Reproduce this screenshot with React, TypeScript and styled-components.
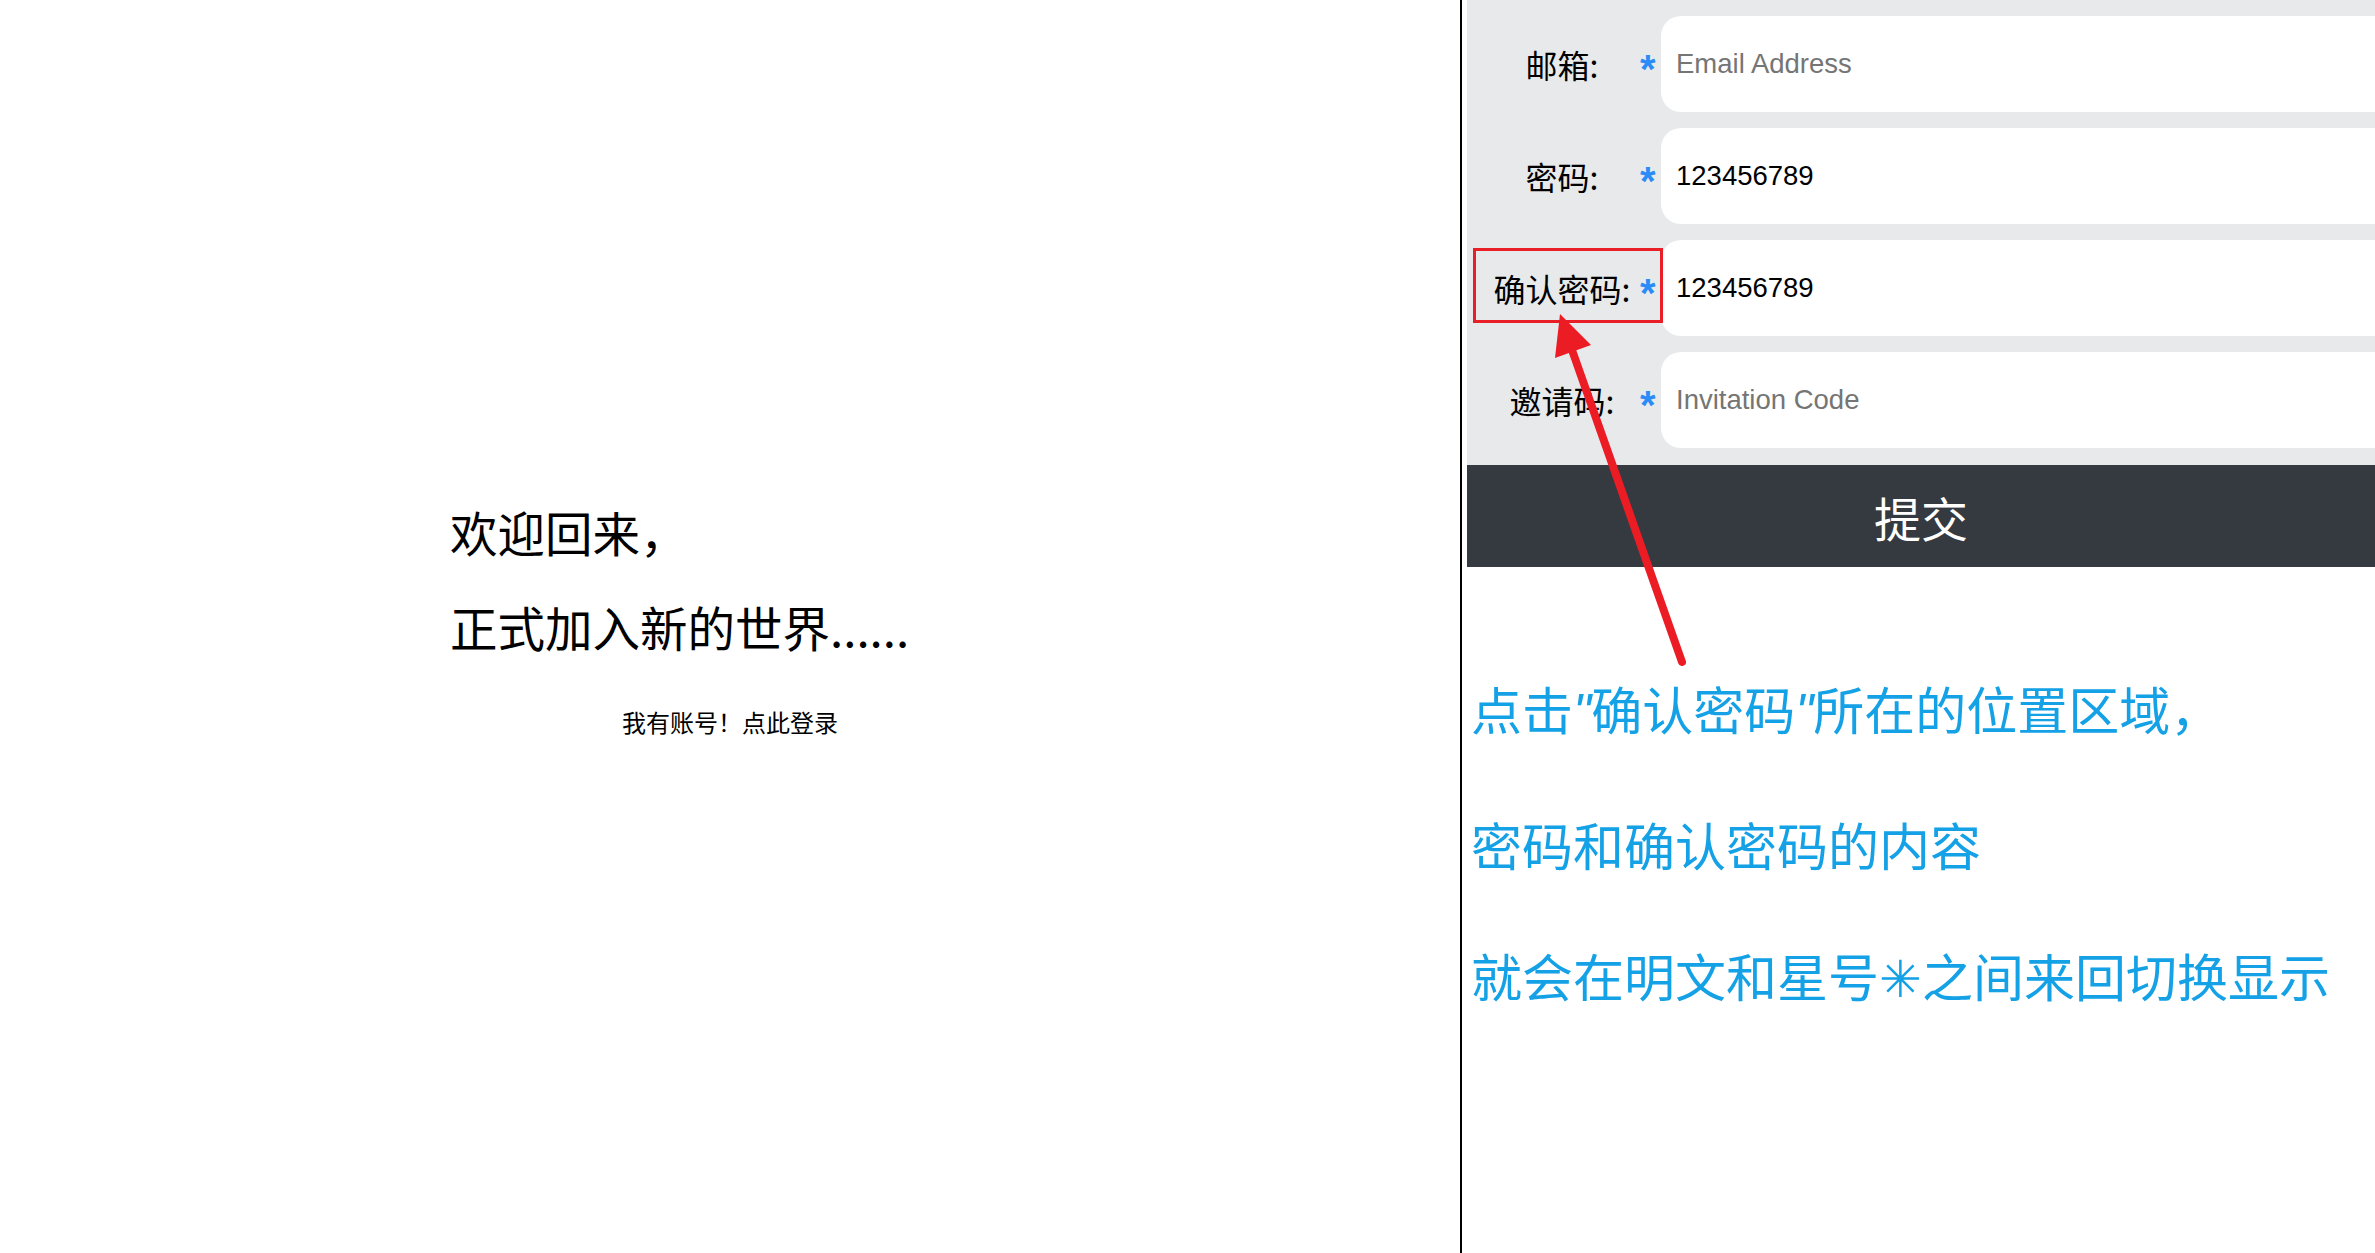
import React from "react";
import styled, { createGlobalStyle } from "styled-components";

const GlobalStyle = createGlobalStyle`
  html, body {
    margin: 0;
    padding: 0;
    background: #fff;
  }
  body {
    font-family: "Noto Sans CJK SC", "Liberation Sans", sans-serif;
  }
  * {
    box-sizing: border-box;
  }
`;

const Page = styled.div`
  position: relative;
  display: flex;
  width: 100%;
  height: 100vh;
  overflow: hidden;
`;

const LeftPane = styled.section`
  flex-shrink: 0;
  width: 1462px;
  border-right: 2px solid #000;
  padding-top: 484px;
  display: flex;
  flex-direction: column;
  align-items: center;
`;

const Welcome = styled.h2`
  width: 560px;
  margin: 0;
  font-size: 47.5px;
  font-weight: 400;
  line-height: 95px;
  color: #000;
`;

const LoginHint = styled.p`
  margin: 24px 0 0;
  font-size: 24px;
  line-height: 48px;
  color: #000;
  cursor: pointer;
`;

const RightPane = styled.section`
  flex: 1;
  min-width: 0;
  margin-left: 5px;
  overflow: hidden;
  display: flex;
  flex-direction: column;
`;

const Form = styled.form`
  display: flex;
  flex-direction: column;
`;

const Fields = styled.div`
  display: flex;
  flex-direction: column;
  gap: 16px;
  padding: 16px 0 17px;
  background: #e8e9eb;
`;

const Row = styled.div`
  display: flex;
  align-items: center;
  height: 96px;
`;

const Label = styled.label`
  flex-shrink: 0;
  width: 190px;
  text-align: center;
  font-size: 32px;
  color: #000;
`;

const Star = styled.span`
  flex-shrink: 0;
  width: 16px;
  margin-left: -17px;
  font-family: "Liberation Sans", sans-serif;
  font-weight: 700;
  font-size: 40px;
  line-height: 1;
  color: #2a8cf7;
  transform: translateY(5px);
`;

const Input = styled.input`
  flex: 1;
  min-width: 0;
  height: 96px;
  margin-left: 5px;
  margin-right: -40px;
  padding: 0 15px;
  border: none;
  border-radius: 20px;
  background: #fff;
  outline: none;
  font-family: "Liberation Sans", sans-serif;
  font-size: 27.5px;
  color: #000;

  &::placeholder {
    color: #757575;
  }
`;

const Submit = styled.button`
  height: 102px;
  width: 100%;
  border: none;
  background: #343a40;
  color: #fff;
  font-family: "Noto Sans CJK SC", sans-serif;
  font-size: 47px;
  cursor: pointer;
`;

const Notes = styled.div`
  margin-top: 76px;
  padding-left: 4px;
  color: #14a1e6;
  font-size: 51px;
  line-height: 131.5px;
  white-space: nowrap;

  p {
    margin: 0;
  }
`;

const Quote = styled.span`
  font-family: "Liberation Sans", sans-serif;
  font-style: italic;
`;

const Highlight = styled.div`
  position: absolute;
  left: 1473px;
  top: 248px;
  width: 190px;
  height: 75px;
  border: 3px solid #e81f27;
  pointer-events: none;
`;

const ArrowLayer = styled.svg`
  position: absolute;
  inset: 0;
  width: 100%;
  height: 100%;
  pointer-events: none;
`;

const fields = [
  { label: "邮箱:", placeholder: "Email Address", value: "" },
  { label: "密码:", placeholder: "Password", value: "123456789" },
  { label: "确认密码:", placeholder: "Confirm Password", value: "123456789" },
  { label: "邀请码:", placeholder: "Invitation Code", value: "" },
];

export default function App() {
  return (
    <>
      <GlobalStyle />
      <Page>
        <LeftPane>
          <Welcome>
            欢迎回来，
            <br />
            正式加入新的世界......
          </Welcome>
          <LoginHint>我有账号！点此登录</LoginHint>
        </LeftPane>

        <RightPane>
          <Form onSubmit={(e) => e.preventDefault()}>
            <Fields>
              {fields.map((f) => (
                <Row key={f.label}>
                  <Label>{f.label}</Label>
                  <Star>*</Star>
                  <Input
                    type="text"
                    placeholder={f.placeholder}
                    defaultValue={f.value}
                  />
                </Row>
              ))}
            </Fields>
            <Submit type="submit">提交</Submit>
          </Form>

          <Notes>
            <p>
              点击<Quote>"</Quote>确认密码<Quote>"</Quote>所在的位置区域，
            </p>
            <p>密码和确认密码的内容</p>
            <p>就会在明文和星号{"\u2733\uFE0E"}之间来回切换显示</p>
          </Notes>
        </RightPane>

        <Highlight />
        <ArrowLayer viewBox="0 0 2375 1253" preserveAspectRatio="xMinYMin meet">
          <line
            x1="1572"
            y1="350"
            x2="1682"
            y2="662"
            stroke="#ec1c24"
            strokeWidth="8"
            strokeLinecap="round"
          />
          <polygon points="1560,314 1591,345 1555,358" fill="#ec1c24" />
        </ArrowLayer>
      </Page>
    </>
  );
}
